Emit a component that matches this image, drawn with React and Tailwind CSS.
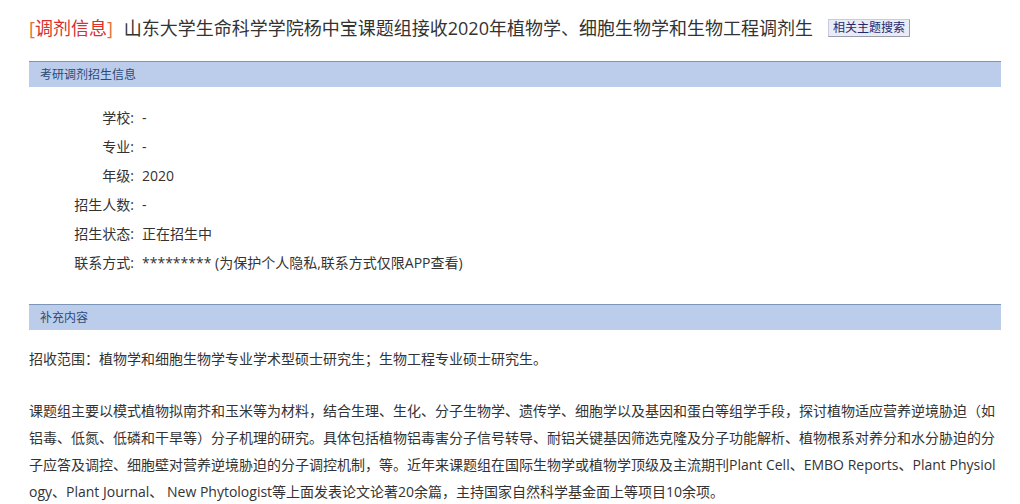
const rows = [
  ['学校', '-'],
  ['专业', '-'],
  ['年级', '2020'],
  ['招生人数', '-'],
  ['招生状态', '正在招生中'],
  ['联系方式', '********* (为保护个人隐私,联系方式仅限APP查看)'],
]

function Bar({ children }) {
  return (
    <div className="mr-[19px] h-[26px] border-t border-[#7b96b8] bg-[#bccdeb] pl-[11px] text-[12px] leading-[25px] text-[#2c4a78]">
      {children}
    </div>
  )
}

export default function App() {
  return (
    <div
      className="w-[1020px] h-[504px] overflow-hidden bg-white pl-[29px] text-[#333]"
      style={{ fontFamily: '"Open Sans", "Noto Sans CJK SC", sans-serif' }}
    >
      {/* Title */}
      <div className="flex items-center pt-[10px] h-[46px]">
        <span className="text-[18px] leading-[36px]">
          <span className="text-[#e0703a]">[</span>
          <span className="text-[#d9302b]">调剂信息</span>
          <span className="text-[#e0703a]">]</span>
        </span>
        <span className="ml-[11px] text-[18px] leading-[36px] text-[#333]">
          山东大学生命科学学院杨中宝课题组接收2020年植物学、细胞生物学和生物工程调剂生
        </span>
        <span className="ml-[15px] h-[18px] border border-[#c8cbe0] border-r-[#9a9aa8] border-b-[#9a9aa8] bg-[#e9ebf6] px-[4px] text-[12px] leading-[16px] text-[#1f2a6e]">
          相关主题搜索
        </span>
      </div>

      <div className="mt-[15px]">
        <Bar>考研调剂招生信息</Bar>
      </div>

      {/* Info rows */}
      <div className="mt-[16px] text-[14px]">
        {rows.map(([k, v]) => (
          <div key={k} className="flex h-[29px] items-center">
            <span className="w-[105px] text-right">{k}:</span>
            <span className="ml-[8px]">{v}</span>
          </div>
        ))}
      </div>

      <div className="mt-[27px]">
        <Bar>补充内容</Bar>
      </div>

      <p className="mt-[15px] text-[14px] leading-[27px]">
        招收范围：植物学和细胞生物学专业学术型硕士研究生；生物工程专业硕士研究生。
      </p>

      <p className="mt-[25px] w-[970px] text-[14px] leading-[27px] break-all">
        课题组主要以模式植物拟南芥和玉米等为材料，结合生理、生化、分子生物学、遗传学、细胞学以及基因和蛋白等组学手段，探讨植物适应营养逆境胁迫（如铝毒、低氮、低磷和干旱等）分子机理的研究。具体包括植物铝毒害分子信号转导、耐铝关键基因筛选克隆及分子功能解析、植物根系对养分和水分胁迫的分子应答及调控、细胞壁对营养逆境胁迫的分子调控机制，等。近年来课题组在国际生物学或植物学顶级及主流期刊Plant Cell、EMBO Reports、Plant Physiology、Plant Journal、 New Phytologist等上面发表论文论著20余篇，主持国家自然科学基金面上等项目10余项。
      </p>
    </div>
  )
}
